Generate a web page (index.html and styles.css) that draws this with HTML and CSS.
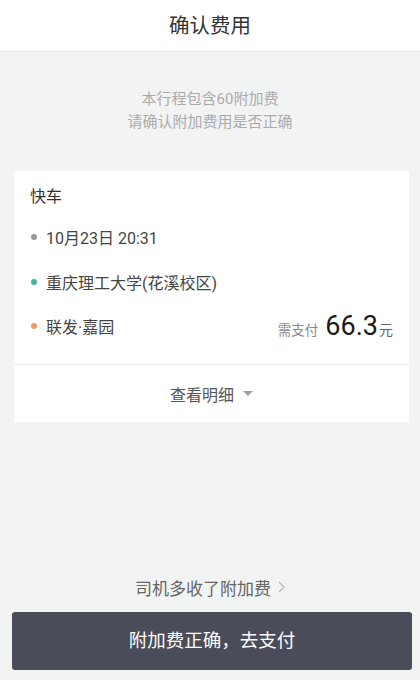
FILE: index.html
```html
<!DOCTYPE html>
<html lang="zh-CN">
<head>
    <meta charset="UTF-8">
    <meta name="viewport" content="width=device-width, initial-scale=1.0">
    <title>确认费用</title>
    <link rel="stylesheet" href="styles.css">
</head>
<body>
<div class="page">
    <div class="header">确认费用</div>

    <div class="notice">
        <p>本行程包含60附加费</p>
        <p>请确认附加费用是否正确</p>
    </div>

    <div class="card">
        <div class="trip">
            <div class="car">快车</div>
            <div class="row">
                <span class="dot gray"></span>
                <span class="txt">10月23日 20:31</span>
            </div>
            <div class="row">
                <span class="dot green"></span>
                <span class="txt">重庆理工大学(花溪校区)</span>
            </div>
            <div class="row">
                <span class="dot orange"></span>
                <span class="txt">联发·嘉园</span>
                <span class="price">
                    <span class="need">需支付</span>
                    <span class="num">66.3</span>
                    <span class="unit">元</span>
                </span>
            </div>
        </div>
        <div class="detail">
            查看明细
            <svg class="caret" width="10" height="6" viewBox="0 0 10 6"><path d="M0 0 L10 0 L5 5 Z" fill="#a0a0a0"/></svg>
        </div>
    </div>

    <div class="space"></div>

    <div class="complain">
        司机多收了附加费
        <svg class="arrow" width="7" height="12" viewBox="0 0 7 12"><path d="M1 1 L6 6 L1 11" fill="none" stroke="#b5b5b5" stroke-width="1.2"/></svg>
    </div>
    <div class="btn">附加费正确，去支付</div>
</div>
</body>
</html>
```

FILE: styles.css
```css
*{
    margin: 0;
    padding: 0;
    box-sizing: border-box;
}
body{
    background-color: #f2f3f3;
    font-family: Roboto, "Noto Sans CJK SC", sans-serif;
    color: #333;
}
.page{
    height: 680px;
    display: flex;
    flex-direction: column;
}
.header{
    height: 52px;
    background-color: #fff;
    border-bottom: 1px solid #e2e5e5;
    text-align: center;
    font-size: 20.5px;
    line-height: 52px;
    color: #333;
}
.notice{
    margin-top: 36px;
    text-align: center;
    color: #ababab;
    font-size: 15px;
    line-height: 23px;
}
.card{
    margin: 37px 11px 0 14px;
    background-color: #fff;
}
.trip{
    padding: 14px 16px 0 16px;
    height: 194px;
    border-bottom: 1px solid #e8e8e8;
}
.car{
    font-size: 16px;
    line-height: 24px;
    color: #333;
}
.row{
    display: flex;
    align-items: center;
    height: 44.5px;
    font-size: 16px;
    color: #444;
}
.row:nth-child(2){
    margin-top: 6px;
}
.dot{
    width: 6px;
    height: 6px;
    border-radius: 50%;
    margin: 0 9px 0 1px;
}
.gray{
    background-color: #999;
}
.green{
    background-color: #45b29a;
}
.orange{
    background-color: #ed9a65;
}
.price{
    margin-left: auto;
    display: flex;
    align-items: baseline;
    color: #222;
}
.need{
    font-size: 13.5px;
    color: #888;
    margin-right: 7px;
}
.num{
    font-size: 27px;
    color: #1a1a1a;
}
.unit{
    font-size: 14px;
    color: #666;
    margin-left: 1px;
}
.detail{
    height: 57px;
    display: flex;
    align-items: center;
    justify-content: center;
    font-size: 16px;
    color: #555;
}
.caret{
    margin-left: 9px;
}
.space{
    flex: 1;
}
.complain{
    display: flex;
    align-items: center;
    justify-content: center;
    font-size: 17px;
    color: #666;
    height: 30px;
    margin-bottom: 10px;
}
.arrow{
    margin-left: 7px;
}
.btn{
    margin: 0 8px 10px 12px;
    height: 58px;
    background-color: #4a4c59;
    border-radius: 3px;
    color: #fff;
    font-size: 18.5px;
    line-height: 58px;
    text-align: center;
}
```
